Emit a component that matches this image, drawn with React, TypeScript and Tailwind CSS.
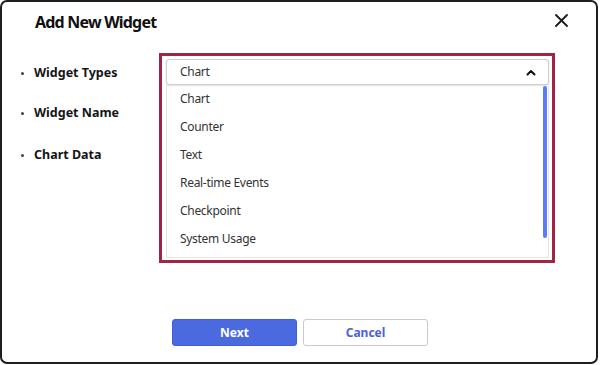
import React from "react";

const items = ["Chart", "Counter", "Text", "Real-time Events", "Checkpoint", "System Usage"];

function Label({ text, className }: { text: string; className?: string }) {
  return (
    <div className={"flex items-center h-[16px] " + (className ?? "")}>
      <span className="w-[3px] h-[3px] rounded-full bg-[#444] mr-[10px] ml-[1px]" />
      <span className="text-[12.5px] font-bold text-[#151515] leading-[16px]">{text}</span>
    </div>
  );
}

export default function App() {
  return (
    <div
      className="w-[600px] h-[365px] bg-white"
      style={{ fontFamily: '"Noto Sans", "Open Sans", sans-serif' }}
    >
      <div className="w-[598px] h-[364px] border-2 border-[#1e1e1e] rounded-[7px] flex flex-col bg-white">
        {/* header */}
        <div className="flex items-start justify-between pl-[33px] pr-[28px] pt-[8px]">
          <h1 className="text-[16px] font-bold leading-[24px] text-[#111] tracking-[-0.8px]">
            Add New Widget
          </h1>
          <svg width="13" height="13" viewBox="0 0 13 13" className="mt-[4px]">
            <path d="M1 1 L12 12 M12 1 L1 12" stroke="#1a1a1a" strokeWidth="1.8" strokeLinecap="round" />
          </svg>
        </div>

        {/* body */}
        <div className="flex mt-[19px]">
          <div className="w-[157px] pl-[18px] pt-[12px] flex flex-col">
            <Label text="Widget Types" />
            <Label text="Widget Name" className="mt-[24px]" />
            <Label text="Chart Data" className="mt-[26px]" />
          </div>
          <div className="w-[396px] h-[210px] border-[3px] border-[#a12446] pl-[4px] pr-[3px] pt-[3px]">
            <div className="h-[26px] rounded-[3px] border border-[#cdcdcd] shadow-[0_1px_2px_rgba(0,0,0,0.12)] flex items-center justify-between pl-[13px] pr-[12px] bg-white">
              <span className="text-[12px] text-[#333] tracking-[-0.3px]">Chart</span>
              <svg width="10" height="7" viewBox="0 0 10 7">
                <path d="M1.5 5.5 L5 2 L8.5 5.5" fill="none" stroke="#111" strokeWidth="2" strokeLinecap="round" strokeLinejoin="round" />
              </svg>
            </div>
            <div className="relative h-[173px] border-x border-b border-[#e4e4e4] pb-[5px]">
              {items.map((it) => (
                <div key={it} className="h-[28px] flex items-center pl-[13px] text-[12px] text-[#333] tracking-[-0.3px]">
                  {it}
                </div>
              ))}
              <div className="absolute right-[1px] top-[1px] w-[4px] h-[152px] rounded-full bg-[#5b7cf9]" />
            </div>
          </div>
        </div>

        {/* footer */}
        <div className="mt-auto flex gap-[6px] pl-[170px] pb-[16px]">
          <button className="w-[125px] h-[27px] rounded-[3px] bg-[#4b6ae0] border border-[#3f5dd4] text-white text-[12px] font-bold">
            Next
          </button>
          <button className="w-[125px] h-[27px] rounded-[3px] bg-white border border-[#c9c9c9] text-[#4a62d9] text-[12px] font-bold">
            Cancel
          </button>
        </div>
      </div>
    </div>
  );
}
